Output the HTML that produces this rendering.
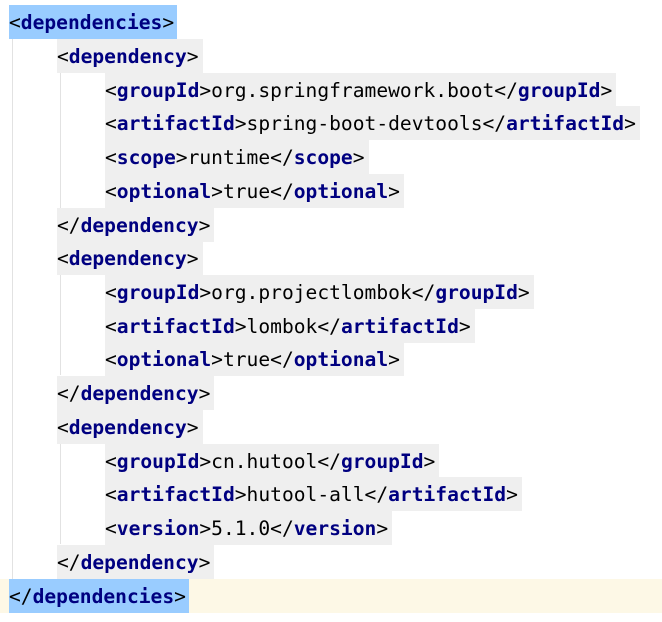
<!DOCTYPE html>
<html><head><style>
body{margin:0;background:#fff;width:662px;height:622px;overflow:hidden;position:relative;font-family:"DejaVu Sans Mono","Liberation Mono",monospace;font-size:19.6px}
.l{position:absolute;left:0;height:34px;line-height:34px;white-space:pre;width:662px}
.g,.h{display:inline-block;height:34px;line-height:35px;vertical-align:top}
.g{background:#efefef;padding-right:4px}
.h{background:#99ccff;padding-right:3px}
b{color:#000080;font-weight:bold}
.v{position:absolute;width:1px;background:#e2e2e2}
</style></head><body>
<div class="v" style="left:12px;top:39px;height:540px"></div>
<div class="v" style="left:60px;top:73px;height:135px"></div>
<div class="v" style="left:60px;top:275px;height:100px"></div>
<div class="v" style="left:60px;top:444px;height:100px"></div>
<div class="l" style="top:5px;left:9px"><span class="h">&lt;<b>dependencies</b>&gt;</span></div>
<div class="l" style="top:39px;left:57px"><span class="g">&lt;<b>dependency</b>&gt;</span></div>
<div class="l" style="top:73px;left:105px"><span class="g">&lt;<b>groupId</b>&gt;org.springframework.boot&lt;/<b>groupId</b>&gt;</span></div>
<div class="l" style="top:106px;left:105px"><span class="g">&lt;<b>artifactId</b>&gt;spring-boot-devtools&lt;/<b>artifactId</b>&gt;</span></div>
<div class="l" style="top:140px;left:105px"><span class="g">&lt;<b>scope</b>&gt;runtime&lt;/<b>scope</b>&gt;</span></div>
<div class="l" style="top:174px;left:105px"><span class="g">&lt;<b>optional</b>&gt;true&lt;/<b>optional</b>&gt;</span></div>
<div class="l" style="top:208px;left:57px"><span class="g">&lt;/<b>dependency</b>&gt;</span></div>
<div class="l" style="top:241px;left:57px"><span class="g">&lt;<b>dependency</b>&gt;</span></div>
<div class="l" style="top:275px;left:105px"><span class="g">&lt;<b>groupId</b>&gt;org.projectlombok&lt;/<b>groupId</b>&gt;</span></div>
<div class="l" style="top:309px;left:105px"><span class="g">&lt;<b>artifactId</b>&gt;lombok&lt;/<b>artifactId</b>&gt;</span></div>
<div class="l" style="top:342px;left:105px"><span class="g">&lt;<b>optional</b>&gt;true&lt;/<b>optional</b>&gt;</span></div>
<div class="l" style="top:376px;left:57px"><span class="g">&lt;/<b>dependency</b>&gt;</span></div>
<div class="l" style="top:410px;left:57px"><span class="g">&lt;<b>dependency</b>&gt;</span></div>
<div class="l" style="top:444px;left:105px"><span class="g">&lt;<b>groupId</b>&gt;cn.hutool&lt;/<b>groupId</b>&gt;</span></div>
<div class="l" style="top:477px;left:105px"><span class="g">&lt;<b>artifactId</b>&gt;hutool-all&lt;/<b>artifactId</b>&gt;</span></div>
<div class="l" style="top:511px;left:105px"><span class="g">&lt;<b>version</b>&gt;5.1.0&lt;/<b>version</b>&gt;</span></div>
<div class="l" style="top:545px;left:57px"><span class="g">&lt;/<b>dependency</b>&gt;</span></div>
<div class="l" style="top:579px;left:0;background:#fdf8e6;padding-left:9px"><span class="h">&lt;/<b>dependencies</b>&gt;</span></div>
</body></html>
